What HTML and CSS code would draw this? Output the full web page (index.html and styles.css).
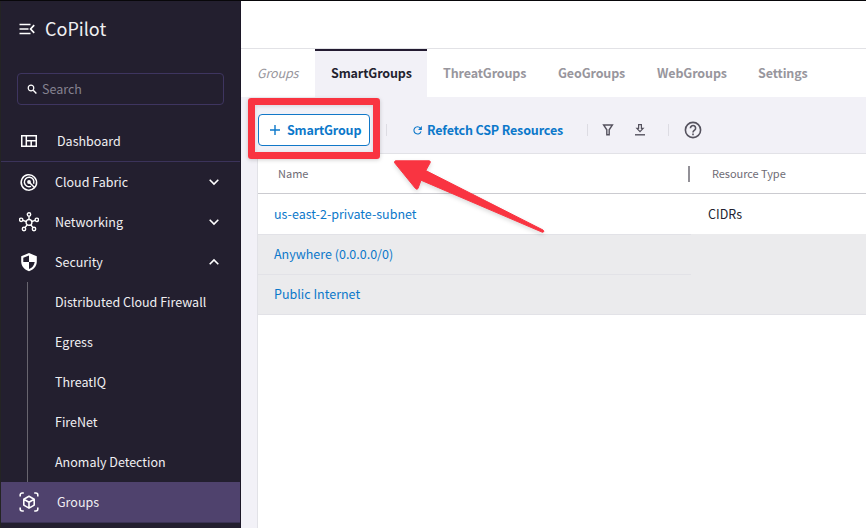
FILE: index.html
```html
<!DOCTYPE html>
<html lang="en">
<head>
<meta charset="utf-8">
<title>CoPilot</title>
<link rel="stylesheet" href="styles.css">
</head>
<body>
<div class="app">
  <aside class="sidebar">
    <div class="brand">
      <svg class="menu-icon" width="16" height="12" viewBox="0 0 16 12" fill="none" stroke="#fff" stroke-width="1.7"><path d="M.5 1.500h11M.5 6h9M.5 10.500h11M15.200 2.200L11.600 6L15.200 9.800"/></svg>
      <span>CoPilot</span>
    </div>
    <div class="search">
      <svg width="11" height="11" viewBox="0 0 11 11" fill="none" stroke="#fff"><circle cx="4" cy="4" r="2.8" stroke-width="1.2"/><path d="M6.2 6.2L9.4 9.4" stroke-width="1.4"/></svg>
      <span>Search</span>
    </div>
    <nav>
      <a class="item dashboard">
        <svg class="icon" viewBox="0 0 20 20" fill="none" stroke="#fff" stroke-width="1.5"><path d="M2.75 4.75h14.5v10.6H2.75zM7.3 4.75v10.6M7.3 9.8h9.9M12.2 9.8v5.5"/></svg>
        <span class="indent">Dashboard</span>
      </a>
      <a class="item">
        <svg class="icon" viewBox="0 0 20 20" fill="none" stroke="#fff" stroke-width="1.5"><path d="M15.6 15.6A7.7 7.7 0 1 1 17.4 12M14.6 11.7A4.8 4.8 0 1 0 12 14.4"/><circle cx="10" cy="10" r="1.9" fill="#fff" stroke="none"/><path d="M10 10l6 6M17.6 11.5a7.7 7.7 0 0 1-2 4"/></svg>
        <span>Cloud Fabric</span>
        <svg class="chev" viewBox="0 0 10 6"><path d="M.7.7L5 5L9.3.7"/></svg>
      </a>
      <a class="item">
        <svg class="icon" viewBox="0 0 20 20" fill="none" stroke="#fff" stroke-width="1.4"><circle cx="10" cy="10.4" r="2.9"/><circle cx="10" cy="2.4" r="1.7"/><circle cx="2.2" cy="7.8" r="1.7"/><circle cx="17.8" cy="7.8" r="1.7"/><circle cx="5" cy="17" r="1.7"/><circle cx="15" cy="17" r="1.7"/><path d="M10 4v3.5M3.8 8.3l3.4 1.2M16.2 8.3l-3.4 1.2M6 15.6l2.2-2.8M14 15.6l-2.2-2.8"/></svg>
        <span>Networking</span>
        <svg class="chev" viewBox="0 0 10 6"><path d="M.7.7L5 5L9.3.7"/></svg>
      </a>
      <a class="item">
        <svg class="icon" viewBox="0 0 20 20"><path fill="#fff" d="M10 1L17.8 4.3V9.5C17.8 14 14.6 18 10 19.2C5.4 18 2.2 14 2.2 9.5V4.3z"/><path fill="#231f2f" d="M10 3.5V10H4.3V5.7zM10 10h5.7c-.4 3.3-2.7 6.1-5.7 7.1z"/></svg>
        <span>Security</span>
        <svg class="chev" viewBox="0 0 10 6"><path d="M.7 5.3L5 1L9.3 5.3"/></svg>
      </a>
      <div class="sub">
        <a>Distributed Cloud Firewall</a>
        <a>Egress</a>
        <a>ThreatIQ</a>
        <a>FireNet</a>
        <a>Anomaly Detection</a>
      </div>
      <a class="item current">
        <svg class="icon" viewBox="0 0 20 20" fill="none" stroke="#fff" stroke-width="1.6" stroke-linejoin="round"><path d="M1.2 4.6V3a2 2 0 0 1 2-2h1.6M15.2 1h1.6a2 2 0 0 1 2 2v1.6M18.8 15.4V17a2 2 0 0 1-2 2h-1.6M4.8 19H3.2a2 2 0 0 1-2-2v-1.6"/><path d="M10 4.2l5.2 3v5.9L10 16.1l-5.2-3V7.2zM4.8 7.2l5.2 3l5.2-3M10 10.2v5.9"/></svg>
        <span class="indent">Groups</span>
      </a>
    </nav>
  </aside>
  <main>
    <header class="topbar"></header>
    <div class="tabs">
      <div class="tab crumb">Groups</div>
      <div class="tab active">SmartGroups</div>
      <div class="tab threat">ThreatGroups</div>
      <div class="tab geo">GeoGroups</div>
      <div class="tab web">WebGroups</div>
      <div class="tab settings">Settings</div>
    </div>
    <div class="toolbar">
      <button class="add">
        <svg width="10" height="10" viewBox="0 0 10 10" stroke="#0c78ca" stroke-width="1.4"><path d="M5 0v10M0 5h10"/></svg>
        <span>SmartGroup</span>
        <i class="callout"></i>
      </button>
      <i class="divider d1"></i>
      <div class="refetch">
        <svg width="9" height="9" viewBox="0 0 9 9" fill="none" stroke="#0c78ca" stroke-width="1.1"><path d="M7.3 2.1A3.6 3.6 0 1 0 8 5.3"/><path d="M8.9 0v3.9H5z" fill="#0c78ca" stroke="none"/></svg>
        <span>Refetch CSP Resources</span>
      </div>
      <i class="divider d2"></i>
      <svg class="filter" width="12" height="12" viewBox="0 0 12 12" fill="none" stroke="#55525e" stroke-width="1.4"><path d="M1.6 1h8.8L7.2 5.8v5H4.8v-5z"/></svg>
      <svg class="download" width="10" height="12" viewBox="0 0 10 12" fill="none" stroke="#55525e" stroke-width="1.2"><path d="M3.6.7h2.8v3.7h1.7L5 7.6L1.9 4.4h1.7z"/><path d="M0 10.8h10" stroke-width="1.4"/></svg>
      <i class="divider d3"></i>
      <svg class="help" width="18" height="18" viewBox="0 0 18 18" fill="none" stroke="#55525e" stroke-width="1.6"><circle cx="9" cy="9" r="7.6"/><path d="M6.4 7.2a2.6 2.6 0 1 1 4.2 2C9.6 10 9 10.3 9 11.5M9 12.5v1.700"/></svg>
    </div>
    <section class="table">
      <div class="row head"><div class="name">Name</div><div class="type">Resource Type</div></div>
      <div class="row"><div class="name"><a>us-east-2-private-subnet</a></div><div class="type">CIDRs</div></div>
      <div class="row shaded"><div class="name"><a>Anywhere (0.0.0.0/0)</a></div><div class="type"></div></div>
      <div class="row shaded last"><div class="name"><a>Public Internet</a></div><div class="type"></div></div>
    </section>
  </main>
  <svg class="arrow" width="160" height="84" viewBox="0 0 160 84"><path d="M4.500 1.800H38.500Q39.800 2.500 39 4L34.800 11.600L152 71Q154 73 151.500 73.300L30 21.200L27 29.500Q26 31 24.500 29.500L3.800 4Q2.800 2.500 4.500 1.800z" fill="#f93441" stroke="#f93441" stroke-linejoin="round"/></svg>
</div>
</body>
</html>
```
FILE: styles.css
```css
* { box-sizing: border-box; }
body {
  margin: 0;
  font-family: "Noto Sans CJK SC", "Noto Sans", sans-serif;
  font-size: 12.5px;
  line-height: 20px;
  white-space: nowrap;
  overflow: hidden;
}
svg { display: block; flex: none; }
.app {
  position: relative;
  display: flex;
  width: 866px;
  height: 528px;
  border-top: 1px solid #08070a;
}
.sidebar {
  flex: none;
  width: 241px;
  background: #231f2f;
  border-left: 1px solid #242424;
  border-right: 1px solid #1c1727;
  color: #f0eff2;
}
.brand {
  display: flex;
  align-items: center;
  gap: 10px;
  height: 56px;
  padding-left: 18px;
  font-size: 18px;
}
.brand span { margin-top: -2px; }
.search {
  display: flex;
  align-items: center;
  gap: 4px;
  width: 207px;
  height: 32px;
  margin: 16px 0 16px 16px;
  padding-left: 9px;
  border: 1px solid #3e3560;
  border-radius: 4px;
  color: #858290;
}
.item {
  display: flex;
  align-items: center;
  height: 40px;
  padding-left: 18px;
}
.item.dashboard { height: 41px; border-bottom: 1px solid #3b335a; }
.icon { width: 20px; height: 20px; margin-right: 16px; }
.indent { padding-left: 2px; }
.chev {
  width: 10px;
  height: 6px;
  margin: 0 21px 0 auto;
  overflow: visible;
  fill: none;
  stroke: #fff;
  stroke-width: 1.6;
}
.sub { margin-left: 26px; border-left: 1px solid #68656f; }
.sub a { display: block; height: 40px; padding-left: 27px; line-height: 40px; }
.item.current { height: 41px; background: #4f426d; border-bottom: 1px solid #3b3355; }
main { flex: 1; min-width: 0; background: #f2f1f7; }
.topbar { height: 48px; background: #fff; border-bottom: 1px solid #e2e2e6; }
.tabs { display: flex; height: 48px; background: #fff; }
.tab {
  padding-left: 16px;
  line-height: 48px;
  font-weight: 600;
  letter-spacing: -.13px;
  color: #98969d;
}
.crumb { width: 74px; padding-left: 16px; font-weight: 400; font-style: italic; }
.active {
  width: 112px;
  border-top: 2px solid #231b31;
  background: #f2f1f7;
  color: #231f2f;
  line-height: 44px;
}
.threat { width: 115px; }
.geo { width: 99px; }
.web { width: 101px; }
.toolbar {
  display: flex;
  align-items: center;
  height: 56px;
  padding: 10px 0 0 17px;
}
.add {
  position: relative;
  display: flex;
  align-items: center;
  gap: 7px;
  width: 112px;
  height: 32px;
  padding: 0 0 0 11px;
  border: 1px solid #1278c8;
  border-radius: 4px;
  background: #fff;
  color: #0c78ca;
  font: inherit;
  font-weight: 600;
  letter-spacing: -.18px;
}
.callout {
  position: absolute;
  inset: -17px -11px -14px -11px;
  border: 7px solid #f93441;
  border-radius: 3px;
  box-shadow: 0 1px 4px rgba(0, 0, 0, .18), inset 0 1px 4px rgba(0, 0, 0, .12);
}
.divider { width: 1px; height: 12px; background: #dddce3; }
.d1 { margin: 0 26px 0 16px; }
.refetch {
  display: flex;
  align-items: center;
  gap: 5px;
  width: 174px;
  color: #0c78ca;
  font-weight: 600;
  letter-spacing: -.14px;
}
.filter { margin-left: 14px; }
.download { margin-left: 21px; }
.d3 { margin: 0 15px 0 23px; }
.table { height: 375px; margin-left: 16px; background: #fff; border-top: 1px solid #e2e2e7; border-left: 1px solid #e2e2e7; }
.row { display: flex; height: 40px; line-height: 40px; }
.head { border-bottom: 1px solid #cbcbd0; color: #6e6b75; font-size: 11px; line-height: 38px; }
.name { width: 433px; padding-left: 16px; }
.name a { color: #0c78ca; }
.type { flex: 1; padding-left: 17px; color: #231f2f; }
.head .name { position: relative; padding-left: 20px; }
.head .name::after {
  content: "";
  position: absolute;
  top: 12px;
  right: 1px;
  width: 2px;
  height: 16px;
  background: #929097;
}
.head .type { padding-left: 21px; color: #6e6b75; letter-spacing: -.05px; }
.shaded { background: #ebebed; line-height: 38px; }
.shaded .name { border-top: 1px solid #e2e2e7; }
.last { height: 41px; border-bottom: 1px solid #e2e2e7; }
.arrow { position: absolute; left: 391px; top: 158px; filter: drop-shadow(0 2px 2px rgba(0, 0, 0, .15)); }
```
